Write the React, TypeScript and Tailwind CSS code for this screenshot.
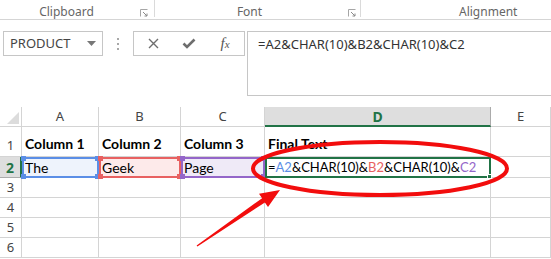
import React from 'react'

const gridLine = 'border-r border-b border-[#d4d4d4]'

function Launcher() {
  return (
    <svg width="8" height="8" viewBox="0 0 8 8" className="shrink-0">
      <path d="M0.5 7.5V0.5H7.5" fill="none" stroke="#a6a6a6" strokeWidth="1" />
      <path d="M3 3L7 7M7 4.5V7H4.5" fill="none" stroke="#8a8a8a" strokeWidth="1" />
    </svg>
  )
}

function Corner({ color, pos }: { color: string; pos: string }) {
  return <span className={`absolute w-[5px] h-[5px] ${color} ${pos}`} />
}

function RangeCell({ text, border, bg, square }: { text: string; border: string; bg: string; square: string }) {
  return (
    <div className={`relative border-2 ${border} ${bg} flex items-end pl-[1px] font-['Lato',sans-serif] text-[14px] leading-[17px] text-black`}>
      <span>{text}</span>
      <Corner color={square} pos="-left-[3px] -top-[3px]" />
      <Corner color={square} pos="-left-[3px] -bottom-[3px]" />
      <Corner color={square} pos="-right-[3px] -top-[3px]" />
      <Corner color={square} pos="-right-[3px] -bottom-[3px]" />
    </div>
  )
}

export default function App() {
  return (
    <div className="relative w-[551px] h-[259px] overflow-hidden bg-white font-['Noto_Sans',sans-serif] text-[#333]">
      {/* ribbon group labels */}
      <div className="flex h-[20px] border-b border-[#d5d5d5] text-[12px] text-[#666]">
        <div className="w-[155px] flex items-center border-r border-[#dadada] mb-[2px] pt-[6px]">
          <span className="flex-1 text-center pr-[7px]">Clipboard</span>
          <span className="mr-[6px] mt-[2px]"><Launcher /></span>
        </div>
        <div className="w-[206px] flex items-center border-r border-[#dadada] mb-[2px] pt-[6px]">
          <span className="flex-1 text-center pr-[4px]">Font</span>
          <span className="mr-[4px] mt-[2px]"><Launcher /></span>
        </div>
        <div className="flex-1 flex items-center mb-[2px] pt-[6px]">
          <span className="pl-[98px]">Alignment</span>
        </div>
      </div>

      {/* name box + formula bar */}
      <div className="flex items-start h-[87px] pt-[11px]">
        <div className="ml-[3px] w-[100px] h-[25px] border border-[#c6c6c6] flex items-center pl-[6px] pr-[6px] text-[13px] text-[#444]">
          <span className="flex-1">PRODUCT</span>
          <svg width="9" height="5" viewBox="0 0 9 5">
            <path d="M0 0H9L4.5 5Z" fill="#777" />
          </svg>
        </div>
        <div className="w-[30px] h-[25px] flex flex-col items-center justify-center gap-[3px]">
          <span className="w-[2px] h-[2px] bg-[#a8a8a8]" />
          <span className="w-[2px] h-[2px] bg-[#a8a8a8]" />
          <span className="w-[2px] h-[2px] bg-[#a8a8a8]" />
        </div>
        <div className="w-[112px] h-[25px] border border-[#c6c6c6] flex items-center pl-[1px]">
          <div className="w-[36px] flex justify-center">
            <svg width="11" height="11" viewBox="0 0 11 11">
              <path d="M1 1L10 10M10 1L1 10" stroke="#6e6e6e" strokeWidth="1.4" />
            </svg>
          </div>
          <div className="w-[36px] flex justify-center">
            <svg width="14" height="11" viewBox="0 0 14 11">
              <path d="M1.5 5.5L5 9L12.5 1.5" fill="none" stroke="#6e6e6e" strokeWidth="2.6" />
            </svg>
          </div>
          <div className="w-[36px] flex justify-center">
            <span className="font-['Liberation_Serif',serif] italic text-[15px] leading-none text-[#555]">
              f<span className="text-[11px]">x</span>
            </span>
          </div>
        </div>
        <div className="ml-[2px] flex-1 h-[65px] border-y border-l border-[#c6c6c6] pl-[10px] pt-[3px] text-[13px] text-[#333] whitespace-nowrap">
          =A2&amp;CHAR(10)&amp;B2&amp;CHAR(10)&amp;C2
        </div>
      </div>

      {/* worksheet grid */}
      <div className="grid grid-cols-[22px_77px_82px_84px_226px_1fr] grid-rows-[20px_30px_21px_20px_20px_20px_20px] text-[13px] text-[#444]">
        {/* column headers */}
        <div className={`${gridLine} relative`}>
          <svg width="12" height="12" viewBox="0 0 12 12" className="absolute right-[2px] bottom-[2px]">
            <path d="M12 0V12H0Z" fill="#dcdcdc" />
          </svg>
        </div>
        <div className={`${gridLine} flex items-center justify-center`}>A</div>
        <div className={`${gridLine} flex items-center justify-center`}>B</div>
        <div className={`${gridLine} flex items-center justify-center`}>C</div>
        <div className="bg-[#dedede] border-r border-[#ababab] border-b-2 border-b-[#217346] flex items-center justify-center font-bold text-[#217346] text-[14px]">D</div>
        <div className={`${gridLine} flex items-center justify-center`}>E</div>

        {/* row 1 */}
        <div className={`${gridLine} flex items-end justify-center pb-[1px]`}>1</div>
        {['Column 1', 'Column 2', 'Column 3', 'Final Text'].map((t) => (
          <div key={t} className={`${gridLine} flex items-end pl-[3px] pb-[2px] font-['Lato',sans-serif] font-bold text-[14px] text-black`}>
            {t}
          </div>
        ))}
        <div className={gridLine} />

        {/* row 2 */}
        <div className="bg-[#dedede] border-b border-[#ababab] border-r-2 border-r-[#217346] flex items-center justify-center font-bold text-[#217346] text-[14px]">2</div>
        <RangeCell text="The" border="border-[#5b8ee6]" bg="bg-[#eef3fc]" square="bg-[#5b8ee6]" />
        <RangeCell text="Geek" border="border-[#e86161]" bg="bg-[#fdeaea]" square="bg-[#e86161]" />
        <RangeCell text="Page" border="border-[#9466c9]" bg="bg-[#efeaf7]" square="bg-[#9466c9]" />
        <div className="relative border-2 border-[#217346] bg-white flex items-end pl-[1px] font-['Lato',sans-serif] text-[13px] leading-[17px] text-black whitespace-nowrap">
          <span>
            =<span className="text-[#5b8ee6]">A2</span>&amp;CHAR(10)&amp;<span className="text-[#e86161]">B2</span>&amp;CHAR(10)&amp;<span className="text-[#9466c9]">C2</span>
          </span>
          <span className="absolute -right-[3px] -bottom-[3px] w-[5px] h-[5px] bg-[#217346] border border-white" />
        </div>
        <div className={gridLine} />

        {/* rows 3-6 */}
        {[3, 4, 5, 6].map((r) => (
          <React.Fragment key={r}>
            <div className={`${gridLine} flex items-center justify-center`}>{r}</div>
            <div className={gridLine} />
            <div className={gridLine} />
            <div className={gridLine} />
            <div className={gridLine} />
            <div className={gridLine} />
          </React.Fragment>
        ))}
      </div>

      {/* annotation: red ellipse and arrow */}
      <svg width="551" height="259" viewBox="0 0 551 259" className="absolute left-0 top-0 pointer-events-none">
        <ellipse cx="380" cy="168.5" rx="127" ry="26.5" fill="none" stroke="#f20d0d" strokeWidth="4" />
        <path d="M196.6 245.4L262.1 198.2L259 193.7L280 190L268 206.9L264.9 202.4L197.4 246.6Z" fill="#f20d0d" />
      </svg>
    </div>
  )
}
